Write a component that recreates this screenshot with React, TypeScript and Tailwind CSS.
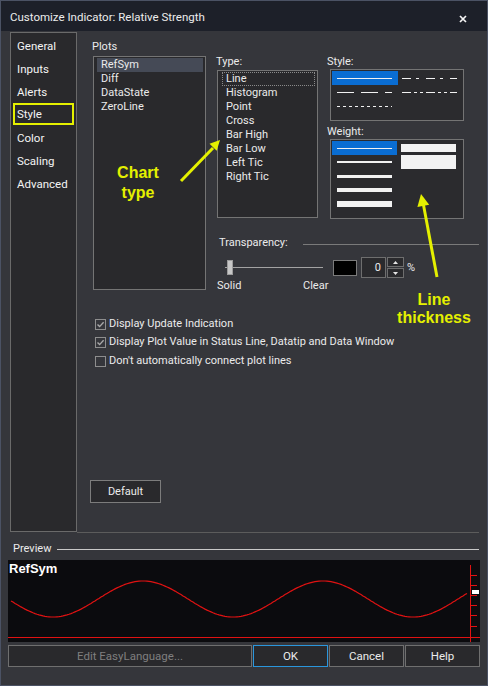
import React from 'react';

// ---------------------------------------------------------------------------
// Data
// ---------------------------------------------------------------------------
const TABS = ['General', 'Inputs', 'Alerts', 'Style', 'Color', 'Scaling', 'Advanced'];
const PLOTS = ['RefSym', 'Diff', 'DataState', 'ZeroLine'];
const TYPES = ['Line', 'Histogram', 'Point', 'Cross', 'Bar High', 'Bar Low', 'Left Tic', 'Right Tic'];

// dash patterns for the style grid, row by row
const STYLES: (string | undefined)[][] = [
  [undefined, '9 5 3 7'],
  ['17 7', '9 3 3 3 3 3'],
  ['3 3', ''],
];

const CHECKS = [
  { label: 'Display Update Indication', on: true },
  { label: 'Display Plot Value in Status Line, Datatip and Data Window', on: true },
  { label: "Don't automatically connect plot lines", on: false },
];

// sine wave in chart-local coordinates
const WAVE = (() => {
  const pts: string[] = [];
  for (let x = 11; x <= 468; x += 2) {
    const y = 599 - 18 * Math.sin((2 * Math.PI * (x - 98)) / 180);
    pts.push(`${(x - 8).toFixed(1)},${(y - 560).toFixed(1)}`);
  }
  return pts.join(' ');
})();

const TICKS = [15, 25, 35, 45, 55, 66];

// ---------------------------------------------------------------------------
// Small pieces
// ---------------------------------------------------------------------------
function DashLine({ dash }: { dash?: string }) {
  if (dash === '') return null;
  return (
    <svg width="55" height="1" className="block">
      <line x1="0" y1="0.5" x2="55" y2="0.5" stroke="#f2f2f2" strokeWidth="1" strokeDasharray={dash} />
    </svg>
  );
}

function CheckBox({ on }: { on: boolean }) {
  return (
    <div className="w-[11px] h-[11px] border border-[#8e8e8e] shrink-0">
      {on && (
        <svg width="9" height="9" viewBox="0 0 9 9" className="block">
          <path d="M1.5 4.5 L3.6 6.6 L7.6 2.2" fill="none" stroke="#a9a9a9" strokeWidth="1.4" />
        </svg>
      )}
    </div>
  );
}

function Btn({ children, w, className = '' }: { children: React.ReactNode; w: string; className?: string }) {
  return (
    <div className={`${w} h-full bg-[#29292c] border flex items-center justify-center ${className}`}>
      {children}
    </div>
  );
}

// ---------------------------------------------------------------------------
// Component
// ---------------------------------------------------------------------------
export default function App() {
  return (
    <div className="relative w-[488px] h-[686px] bg-[#35363b] border border-[#4b5264] flex flex-col text-[11px] leading-[14px] text-[#ebebeb] overflow-hidden font-['Roboto','Noto_Sans',sans-serif]">
      {/* Title bar */}
      <div className="h-[30px] shrink-0 bg-[#1d2029] flex items-center justify-between pl-[9px] pr-[20px]">
        <span className="pt-[2px] text-[11.5px] text-[#ececec]">Customize Indicator: Relative Strength</span>
        <svg width="8" height="8" viewBox="0 0 8 8" className="mt-[6px]">
          <path d="M1 1 L7 7 M7 1 L1 7" stroke="#f4f4f4" strokeWidth="1.7" />
        </svg>
      </div>

      {/* Tabs + page */}
      <div className="flex h-[502px] shrink-0">
        <div className="ml-[9px] mt-[1px] w-[67px] h-[500px] border border-[#6a6a6a] bg-[#29292c] pt-[1px] text-[11.5px]">
          {TABS.map(t =>
            t === 'Style' ? (
              <div key={t} className="h-[23px]">
                <div className="ml-[2px] w-[61px] h-[22px] border-2 border-[#e4f000] pl-[2px] flex items-center text-[#f4f4f4]">
                  {t}
                </div>
              </div>
            ) : (
              <div key={t} className="h-[23px] pl-[6px] flex items-center text-[#f4f4f4]">
                {t}
              </div>
            )
          )}
        </div>

        <div className="flex-1 mr-[8px] border-b border-[#5c5c5c] flex flex-col pl-[15px]">
          <div className="flex items-start">
            {/* Plots */}
            <div className="w-[114px] shrink-0 flex flex-col">
              <div className="mt-[8px] h-[16px] leading-[16px]">Plots</div>
              <div className="ml-[1px] mt-[1px] w-[113px] h-[234px] border border-[#747474] bg-[#29292c] pt-[1px] pl-[3px]">
                {PLOTS.map((p, i) => (
                  <div
                    key={p}
                    className={`w-[106px] h-[14px] pl-[4px] flex items-center ${i === 0 ? 'bg-[#454a56]' : ''}`}
                  >
                    {p}
                  </div>
                ))}
              </div>
            </div>

            {/* Right side: type / style / weight / transparency */}
            <div className="ml-[11px] flex-1 flex flex-col">
              <div className="flex items-start">
                <div className="w-[101px] shrink-0 flex flex-col">
                  <div className="-ml-[1px] mt-[23px] h-[16px] leading-[16px]">Type:</div>
                  <div className="h-[148px] border border-[#747474] bg-[#29292c] pt-[1px] pl-[4px]">
                    {TYPES.map((t, i) => (
                      <div
                        key={t}
                        className={`w-[93px] h-[14px] leading-[12px] pl-[3px] border flex items-center ${
                          i === 0 ? 'border-dotted border-[#8a8a8a]' : 'border-transparent'
                        }`}
                      >
                        {t}
                      </div>
                    ))}
                  </div>
                </div>

                <div className="ml-[12px] w-[134px] shrink-0 flex flex-col">
                  <div className="-ml-[3px] mt-[23px] h-[15px] leading-[15px]">Style:</div>
                  <div className="h-[52px] border border-[#747474] bg-[#2b2b2e] pt-[1px] pl-[1px]">
                    {STYLES.map((row, r) => (
                      <div key={r} className="flex">
                        {row.map((d, c) => (
                          <div
                            key={c}
                            className={`w-[66px] h-[14px] flex items-center ${c === 0 ? 'pl-[5px]' : 'pl-[4px]'} ${
                              r === 0 && c === 0 ? 'bg-[#0a6dd2]' : ''
                            }`}
                          >
                            <DashLine dash={d} />
                          </div>
                        ))}
                      </div>
                    ))}
                  </div>

                  <div className="-ml-[3px] mt-[3px] h-[15px] leading-[15px]">Weight:</div>
                  <div className="h-[80px] border border-[#747474] bg-[#2b2b2e] pt-[1px] pl-[1px] flex">
                    <div className="w-[66px] flex flex-col">
                      {[1, 2, 3, 4, 6].map((h, i) => (
                        <div key={h} className={`h-[14px] pl-[5px] flex items-center ${i === 0 ? 'bg-[#0a6dd2]' : ''}`}>
                          <div className="w-[55px] bg-[#f2f2f2]" style={{ height: h }} />
                        </div>
                      ))}
                    </div>
                    <div className="w-[66px] pl-[4px] flex flex-col">
                      <div className="mt-[3px] w-[55px] h-[8px] bg-[#f2f2f2]" />
                      <div className="mt-[3px] w-[55px] h-[14px] bg-[#f2f2f2]" />
                    </div>
                  </div>
                </div>
              </div>

              {/* Transparency */}
              <div className="mt-[16px] h-[16px] flex items-center">
                <span className="w-[86px] pl-[2px]">Transparency:</span>
                <div className="flex-1 h-px mt-[2px] bg-[#7a7a7a]" />
              </div>
              <div className="mt-[6px] h-[21px] flex items-center">
                <div className="ml-[8px] w-[98px] flex items-center">
                  <div className="w-[2px] h-px bg-[#a3a3a3]" />
                  <div className="w-[6px] h-[15px] bg-[#c7c7c7] border border-[#9c9c9c]" />
                  <div className="flex-1 h-px bg-[#a3a3a3]" />
                </div>
                <div className="ml-[10px] w-[24px] h-[16px] bg-black border border-[#7b7b7b]" />
                <div className="ml-[4px] w-[25px] h-[21px] border border-[#6e6e6e] bg-[#2a2a2d] flex items-center justify-end pr-[4px]">
                  0
                </div>
                <div className="ml-[1px] w-[17px] h-[21px] flex flex-col gap-px">
                  <div className="h-[10px] border border-[#6e6e6e] bg-[#2a2a2d] flex items-center justify-center">
                    <svg width="5" height="3" className="block">
                      <polygon points="2.5,0 5,3 0,3" fill="#e6e6e6" />
                    </svg>
                  </div>
                  <div className="h-[10px] border border-[#6e6e6e] bg-[#2a2a2d] flex items-center justify-center">
                    <svg width="5" height="3" className="block">
                      <polygon points="0,0 5,0 2.5,3" fill="#e6e6e6" />
                    </svg>
                  </div>
                </div>
                <span className="ml-[3px]">%</span>
              </div>
              <div className="h-[16px] flex items-center">
                <span className="w-[86px]">Solid</span>
                <span>Clear</span>
              </div>
            </div>
          </div>

          {/* Options */}
          <div className="mt-[21px] ml-[3px] flex flex-col">
            {CHECKS.map((c, i) => (
              <div key={c.label} className={`h-[18px] flex items-center gap-[3px] ${i === 2 ? 'mt-[1px]' : ''}`}>
                <CheckBox on={c.on} />
                <span>{c.label}</span>
              </div>
            ))}
          </div>

          <div className="mt-auto mb-[29px] -ml-[2px] w-[71px] h-[23px] border border-[#7c7c7c] bg-[#29292c] flex items-center justify-center">
            Default
          </div>
        </div>
      </div>

      {/* Preview */}
      <div className="mt-[8px] h-[16px] flex items-center shrink-0">
        <span className="ml-[12px] w-[44px]">Preview</span>
        <div className="flex-1 h-px mr-[8px] bg-[#c8c8c8]" />
      </div>
      <div className="mt-[3px] ml-[7px] w-[472px] h-[82px] bg-[#0b0b0e] shrink-0">
        <svg width="472" height="82" className="block">
          <text x="1" y="13" fill="#ffffff" fontSize="13" fontWeight="700" fontFamily="Liberation Sans, Arial, sans-serif">
            RefSym
          </text>
          <polyline points={WAVE} fill="none" stroke="#e01212" strokeWidth="1.2" />
          <line x1="0" y1="77.5" x2="472" y2="77.5" stroke="#e01212" strokeWidth="1" />
          <line x1="462.5" y1="5" x2="462.5" y2="82" stroke="#e01212" strokeWidth="1" />
          {TICKS.map(t => (
            <line key={t} x1="462" y1={t + 0.5} x2="469" y2={t + 0.5} stroke="#e01212" strokeWidth="1" />
          ))}
          <rect x="464" y="30" width="7" height="4" fill="#ffffff" />
        </svg>
      </div>

      {/* Buttons */}
      <div className="mt-[3px] ml-[7px] h-[22px] flex gap-[1px] shrink-0 text-[11.5px]">
        <Btn w="w-[244px]" className="border-[#6f6f6f] text-[#7f7f7f]">Edit EasyLanguage...</Btn>
        <Btn w="w-[75px]" className="border-[#2a96dc]">OK</Btn>
        <Btn w="w-[75px]" className="border-[#6f6f6f]">Cancel</Btn>
        <Btn w="w-[75px]" className="border-[#6f6f6f]">Help</Btn>
      </div>

      {/* Yellow annotations laid over the dialog */}
      <div className="absolute left-[-1px] top-[-1px] w-[488px] h-[686px] pointer-events-none font-['Liberation_Sans',Arial,sans-serif] font-bold text-[16px] text-[#e4f000]">
        <svg width="488" height="686" className="absolute left-0 top-0">
          <line x1="181" y1="181" x2="213" y2="148" stroke="#e4f000" strokeWidth="3" />
          <polygon points="220,140 216.7,150.7 209.5,143.8" fill="#e4f000" />
          <line x1="437" y1="277" x2="423.5" y2="205" stroke="#e4f000" strokeWidth="3" />
          <polygon points="421,194 429.2,204.7 417.4,206.9" fill="#e4f000" />
        </svg>
        <div className="absolute left-[98px] top-[163px] w-[80px] text-center leading-[20px]">
          Chart
          <br />
          type
        </div>
        <div className="absolute left-[394px] top-[291px] w-[80px] text-center leading-[18px]">
          Line
          <br />
          thickness
        </div>
      </div>
    </div>
  );
}
